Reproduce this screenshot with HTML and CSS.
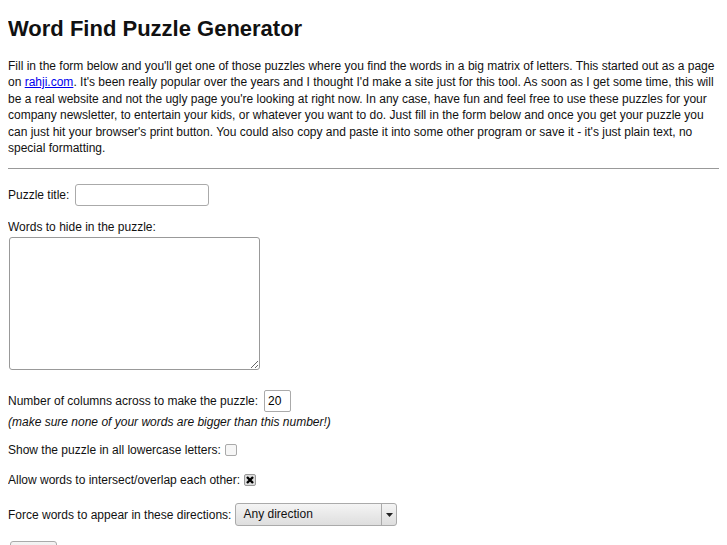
FILE: index.html
```html
<!doctype html>
<html lang="en">
 <head>
  <meta charset="UTF-8">
  <title>Word Find Puzzle Generator</title>
  <link rel="stylesheet" href="styles.css">
 </head>
 <body>
  <h1>Word Find Puzzle Generator</h1>
  <p class="intro">Fill in the form below and you'll get one of those puzzles where you find the words in a big matrix of letters. This started out as a page on <a href="#">rahji.com</a>. It's been really popular over the years and I thought I'd make a site just for this tool. As soon as I get some time, this will be a real website and not the ugly page you're looking at right now. In any case, have fun and feel free to use these puzzles for your company newsletter, to entertain your kids, or whatever you want to do. Just fill in the form below and once you get your puzzle you can just hit your browser's print button. You could also copy and paste it into some other program or save it - it's just plain text, no special formatting.</p>
  <hr>
  <form id="puzzleForm">
   <div class="row">
    <label for="title">Puzzle title:</label>
    <input type="text" id="title" class="text-input">
   </div>

   <div class="row stacked">
    <label for="words">Words to hide in the puzzle:</label>
    <textarea id="words" class="words"></textarea>
   </div>

   <div class="row cols-row">
    <label for="cols">Number of columns across to make the puzzle:</label>
    <input type="text" id="cols" class="cols-input" value="20">
   </div>
   <p class="note">(make sure none of your words are bigger than this number!)</p>

   <div class="row check-row">
    <label for="lower">Show the puzzle in all lowercase letters:</label>
    <span class="check" id="lower"></span>
   </div>

   <div class="row check-row">
    <label for="overlap">Allow words to intersect/overlap each other:</label>
    <span class="check checked" id="overlap">
     <svg width="8" height="8" viewBox="0 0 8 8"><path d="M1 1 L7 7 M7 1 L1 7" stroke="#000" stroke-width="2.4"/></svg>
    </span>
   </div>

   <div class="row select-row">
    <label for="dir">Force words to appear in these directions:</label>
    <div class="select" id="dir">
     <span class="select-value">Any direction</span>
     <span class="select-arrow">
      <svg width="7" height="4" viewBox="0 0 7 4"><path d="M0 0 H7 L3.5 4 Z" fill="#222"/></svg>
     </span>
    </div>
   </div>

   <button type="submit" class="submit">Make it</button>
  </form>
 </body>
</html>
```

FILE: styles.css
```css
body {
  margin: 8px;
  font-family: "Liberation Sans", Arial, sans-serif;
  font-size: 12px;
  color: #111;
  background-color: #fff;
}
h1 {
  font-size: 22px;
  font-weight: bold;
  margin: 8px 0 16px;
  line-height: 26px;
}
.intro {
  margin: 0;
  line-height: 16.4px;
}
.intro a {
  color: #00e;
}
hr {
  border: none;
  border-top: 1px solid #999;
  margin: 12px 0 15px;
}
.row {
  display: flex;
  align-items: center;
  gap: 6px;
  margin-bottom: 14px;
}
.row.stacked {
  flex-direction: column;
  align-items: flex-start;
  gap: 3px;
  margin-bottom: 20px;
}
.text-input {
  width: 134px;
  height: 22px;
  box-sizing: border-box;
  border: 1px solid #aaa;
  border-radius: 3px;
  font: inherit;
}
.words {
  width: 251px;
  height: 133px;
  margin-left: 1px;
  box-sizing: border-box;
  border: 1px solid #999;
  border-radius: 3px;
  resize: both;
}
.cols-row {
  margin-bottom: 3px;
}
.cols-input {
  width: 27px;
  height: 22px;
  box-sizing: border-box;
  border: 1px solid #aaa;
  border-radius: 2px;
  padding: 0 3px;
  font: inherit;
}
.note {
  font-style: italic;
  margin: 0 0 14px;
}
.check-row {
  gap: 4px;
  margin-bottom: 16px;
}
.check {
  width: 12px;
  height: 12px;
  box-sizing: border-box;
  border: 1px solid #aaa;
  border-radius: 2px;
  background: #f6f6f6;
  display: flex;
  align-items: center;
  justify-content: center;
}
.check.checked {
  background: #dcdcdc;
  border-color: #999;
}
.select-row {
  gap: 4px;
  margin-top: 15px;
  margin-bottom: 15px;
}
.select {
  width: 162px;
  height: 23px;
  box-sizing: border-box;
  display: flex;
  border: 1px solid #aaa;
  border-radius: 3px;
  background: linear-gradient(#f4f4f4, #dedede);
}
.select-value {
  flex: 1;
  padding-left: 7px;
  line-height: 21px;
}
.select-arrow {
  width: 14px;
  border-left: 1px solid #aaa;
  display: flex;
  align-items: center;
  justify-content: center;
}
.submit {
  margin-left: 2px;
  width: 47px;
  height: 24px;
  border: 1px solid #aaa;
  border-radius: 3px;
  background: linear-gradient(#f4f4f4, #dedede);
  font: inherit;
}
```
